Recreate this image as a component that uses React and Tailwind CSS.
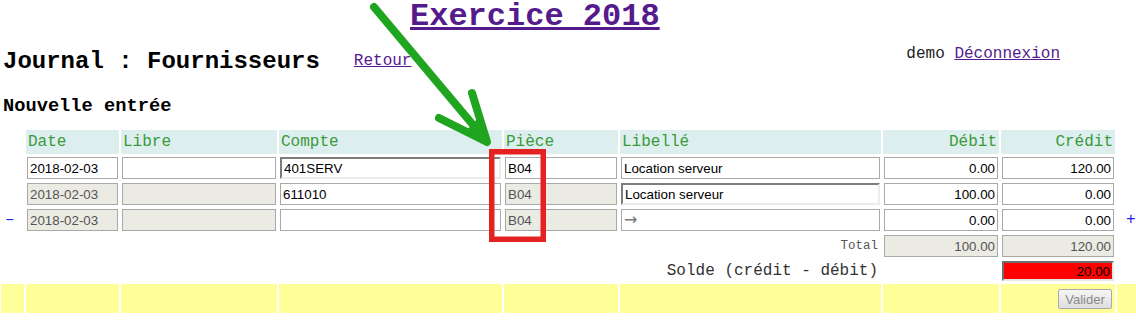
import React from 'react';

const mono = { fontFamily: '"Liberation Mono", "Courier New", monospace' };

// column widths, taken from the table cells
const cols = [23, 93, 156, 223, 114, 261, 116, 114, 20];

const Field = ({ value = '', disabled = false, right = false, inset = false, red = false, placeholder }) => (
  <input
    readOnly
    value={value}
    placeholder={placeholder}
    className={`block w-full px-[2px] text-[13.33px] outline-none font-['Liberation_Sans',Arial,sans-serif] ${
      right ? 'text-right' : 'text-left'
    } ${
      red
        ? 'h-[20px] bg-[#ff0000] text-black border-2 border-t-[#6f6f6f] border-l-[#6f6f6f] border-r-[#e6e6e6] border-b-[#e6e6e6]'
        : inset
        ? 'h-[22px] bg-white text-black border-2 border-t-[#7d7d7d] border-l-[#7d7d7d] border-r-[#ececec] border-b-[#ececec]'
        : disabled
        ? 'h-[22px] bg-[#ebebe4] text-[#545454] border border-[#a9a9a9]'
        : 'h-[22px] bg-white text-black border border-[#a9a9a9]'
    } placeholder:text-[#777] placeholder:text-[16px] placeholder:font-['DejaVu_Sans',sans-serif]`}
  />
);

const Head = ({ children, right }) => (
  <th
    className={`h-[24px] p-0 px-[2px] bg-[#ddeeee] text-[#3a9a3a] text-[16px] font-normal leading-[24px] ${
      right ? 'text-right' : 'text-left'
    }`}
    style={mono}
  >
    {children}
  </th>
);

const rows = [
  { date: '2018-02-03', compte: '401SERV', piece: 'B04', lib: 'Location serveur', debit: '0.00', credit: '120.00', first: true },
  { date: '2018-02-03', compte: '611010', piece: 'B04', lib: 'Location serveur', debit: '100.00', credit: '0.00' },
  { date: '2018-02-03', compte: '', piece: 'B04', lib: '', debit: '0.00', credit: '0.00', last: true },
];

export default function App() {
  return (
    <div className="relative w-[1136px] h-[327px] overflow-hidden bg-white text-black">
      <h1 className="pt-px pl-[410px] text-[32px] font-bold leading-[32px]" style={mono}>
        <a href="#" className="text-[#551a8b] underline">Exercice 2018</a>
      </h1>

      <div className="flex items-start mt-[13px] pl-[3px]">
        <h2 className="mt-[4px] text-[24px] font-bold leading-[24px]" style={mono}>
          Journal : Fournisseurs
        </h2>
        <a href="#" className="ml-[34px] mt-[7px] text-[16px] leading-[16px] text-[#551a8b] underline" style={mono}>
          Retour
        </a>
        <div className="ml-auto mr-[76px] text-[16px] leading-[16px] text-[#222]" style={mono}>
          demo{' '}
          <a href="#" className="text-[#551a8b] underline">Déconnexion</a>
        </div>
      </div>

      <h3 className="mt-[22px] pl-[3px] text-[18.72px] font-bold leading-[20px]" style={mono}>
        Nouvelle entrée
      </h3>

      <div className="mt-[14px] overflow-hidden">
        <table className="-ml-px -mt-[2px] w-[1140px] border-separate border-spacing-[2px] table-fixed">
          <colgroup>
            {cols.map((w, i) => (
              <col key={i} style={{ width: w }} />
            ))}
          </colgroup>
          <thead>
            <tr>
              <th />
              <Head>Date</Head>
              <Head>Libre</Head>
              <Head>Compte</Head>
              <Head>Pièce</Head>
              <Head>Libellé</Head>
              <Head right>Débit</Head>
              <Head right>Crédit</Head>
              <th />
            </tr>
          </thead>
          <tbody>
            {rows.map((r, i) => (
              <tr key={i}>
                <td className="p-0 pl-[4px] text-left text-[16px] text-[#2222ee]" style={mono}>
                  {r.last ? '–' : ''}
                </td>
                <td className="p-px"><Field value={r.date} disabled={!r.first} /></td>
                <td className="p-px"><Field disabled={!r.first} /></td>
                <td className="p-px"><Field value={r.compte} inset={r.first} /></td>
                <td className="p-px"><Field value={r.piece} disabled={!r.first} /></td>
                <td className="p-px">
                  <Field value={r.lib} inset={i === 1} placeholder={r.last ? '→' : undefined} />
                </td>
                <td className="p-px"><Field value={r.debit} right /></td>
                <td className="p-px"><Field value={r.credit} right /></td>
                <td className="p-0 pl-[9px] text-[16px] text-[#2222ee]" style={mono}>
                  {r.last ? '+' : ''}
                </td>
              </tr>
            ))}
            <tr>
              <td colSpan={5} />
              <td className="p-0 pr-[3px] text-right text-[12.5px] text-[#555]" style={mono}>Total</td>
              <td className="p-px"><Field value="100.00" disabled right /></td>
              <td className="p-px"><Field value="120.00" disabled right /></td>
              <td />
            </tr>
            <tr>
              <td colSpan={5} />
              <td className="p-0 pr-[3px] text-right text-[16px] leading-[20px] text-[#333]" style={mono}>
                Solde (crédit - débit)
              </td>
              <td />
              <td className="p-px"><Field value="20.00" right red /></td>
              <td />
            </tr>
            <tr className="h-[29px]">
              {cols.map((_, i) => (
                <td key={i} className="p-0 bg-[#ffff99] text-right">
                  {i === 7 && (
                    <button
                      disabled
                      className="mr-[3px] mb-[2px] h-[20px] w-[54px] rounded-[2px] border border-[#a9a9a9] bg-gradient-to-b from-[#f6f6f6] to-[#dedede] text-[13px] text-[#8a8a8a] font-['Liberation_Sans',Arial,sans-serif] align-middle"
                    >
                      Valider
                    </button>
                  )}
                </td>
              ))}
            </tr>
          </tbody>
        </table>
      </div>

      {/* annotation overlay: arrow and box */}
      <svg className="absolute inset-0 pointer-events-none" width="1136" height="327">
        <line x1="374" y1="7" x2="484" y2="138" stroke="#1fa51f" strokeWidth="8" strokeLinecap="round" />
        <polyline
          points="439,118 487,142 472,93"
          fill="none"
          stroke="#1fa51f"
          strokeWidth="8"
          strokeLinecap="round"
          strokeLinejoin="round"
        />
        <polygon points="489,144 466,131 478,118" fill="#1fa51f" />
        <rect x="491.75" y="151.75" width="51.5" height="87.5" fill="none" stroke="#e52222" strokeWidth="5.5" />
      </svg>
    </div>
  );
}
